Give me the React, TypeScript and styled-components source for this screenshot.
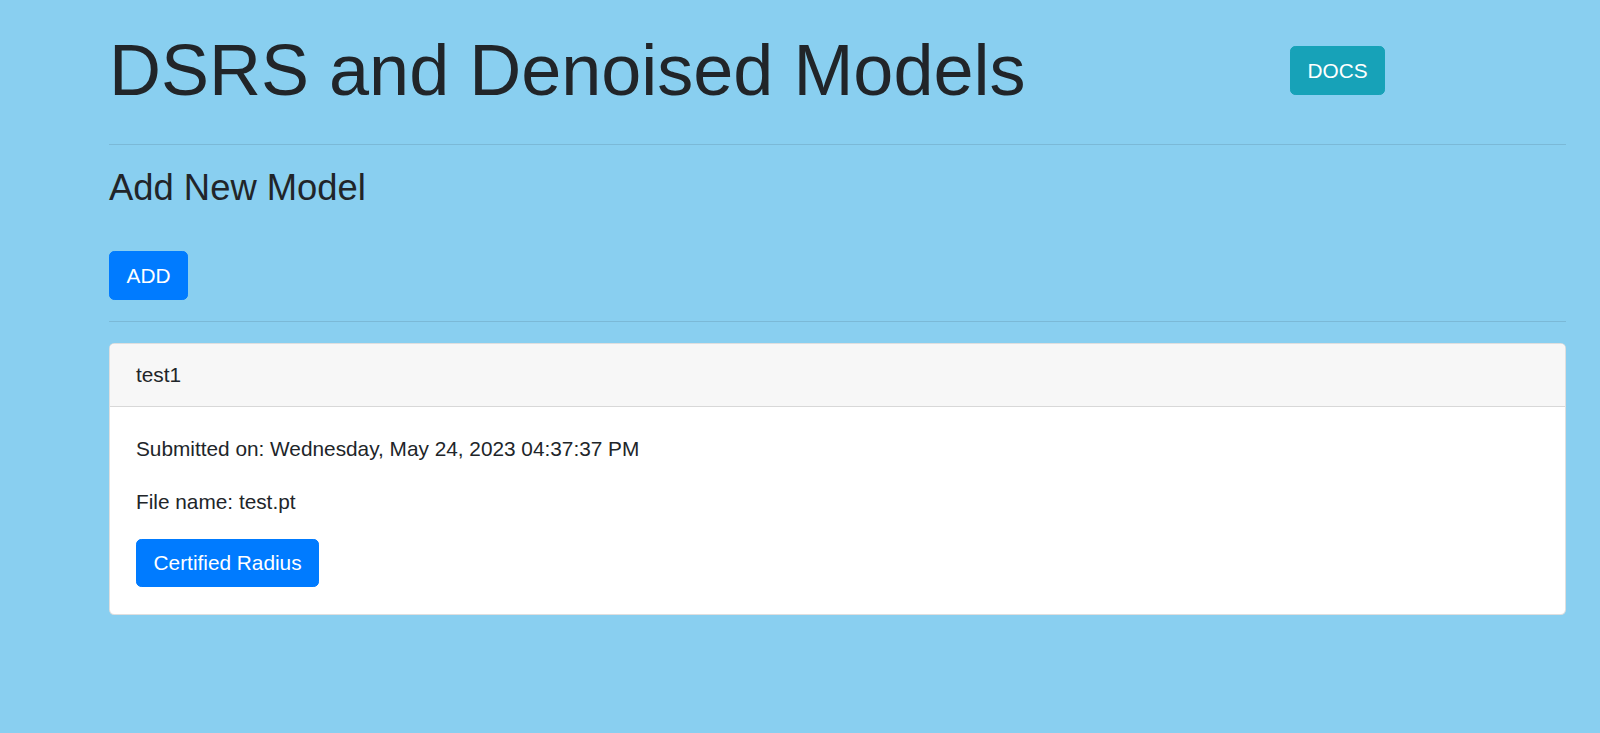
import React from "react";
import styled, { createGlobalStyle } from "styled-components";

const GlobalStyle = createGlobalStyle`
  html, body {
    margin: 0;
    padding: 0;
    background: #89cff0;
    min-height: 100%;
  }
  body {
    font-family: "Liberation Sans", Arial, Helvetica, sans-serif;
    font-size: 20.8px;
    line-height: 1.5;
    color: #212529;
  }
  * { box-sizing: border-box; }
`;

const Page = styled.main`
  min-height: 100vh;
  padding: 27px 34px 40px 109px;
`;

const Header = styled.header`
  display: grid;
  grid-template-columns: 1181px auto;
  align-items: center;
  padding-bottom: 9.6px;
`;

const Title = styled.h1`
  margin: 0;
  font-size: 72px;
  font-weight: 300;
  line-height: 1.2;
  white-space: nowrap;
`;

const Rule = styled.hr`
  margin: 20.8px 0;
  border: 0;
  border-top: 1px solid rgba(0, 0, 0, 0.1);
  height: 0;
`;

const SectionTitle = styled.h3`
  margin: 0;
  padding-bottom: 10.4px;
  font-size: 36.4px;
  font-weight: 500;
  line-height: 1.2;
`;

const Actions = styled.div`
  padding-top: 31.6px;
  display: flex;
`;

const Button = styled.button<{ $variant?: "primary" | "info" }>`
  display: inline-flex;
  align-items: center;
  justify-content: center;
  font-family: inherit;
  font-size: 20.8px;
  line-height: 1.5;
  font-weight: 400;
  padding: 7.8px 16.6px;
  border-radius: 5.2px;
  border: 1px solid ${(p) => (p.$variant === "info" ? "#17a2b8" : "#007bff")};
  background: ${(p) => (p.$variant === "info" ? "#17a2b8" : "#007bff")};
  color: #fff;
  cursor: pointer;
`;

const Card = styled.section`
  background: #fff;
  border: 1px solid rgba(0, 0, 0, 0.125);
  border-radius: 5.2px;
  overflow: hidden;
`;

const CardHeader = styled.div`
  padding: 15.6px 26px;
  background: #f7f7f7;
  border-bottom: 1px solid rgba(0, 0, 0, 0.125);
`;

const CardBody = styled.div`
  padding: 26px 26px 27px;
`;

const Text = styled.p`
  margin: 0 0 21.6px;
`;

const models = [
  {
    name: "test1",
    submitted: "Wednesday, May 24, 2023 04:37:37 PM",
    file: "test.pt",
  },
];

export default function App() {
  return (
    <>
      <GlobalStyle />
      <Page>
        <Header>
          <Title>DSRS and Denoised Models</Title>
          <div>
            <Button $variant="info">DOCS</Button>
          </div>
        </Header>
        <Rule />
        <SectionTitle>Add New Model</SectionTitle>
        <Actions>
          <Button>ADD</Button>
        </Actions>
        <Rule />
        {models.map((m) => (
          <Card key={m.name}>
            <CardHeader>{m.name}</CardHeader>
            <CardBody>
              <Text>Submitted on: {m.submitted}</Text>
              <Text>File name: {m.file}</Text>
              <Button>Certified Radius</Button>
            </CardBody>
          </Card>
        ))}
      </Page>
    </>
  );
}
